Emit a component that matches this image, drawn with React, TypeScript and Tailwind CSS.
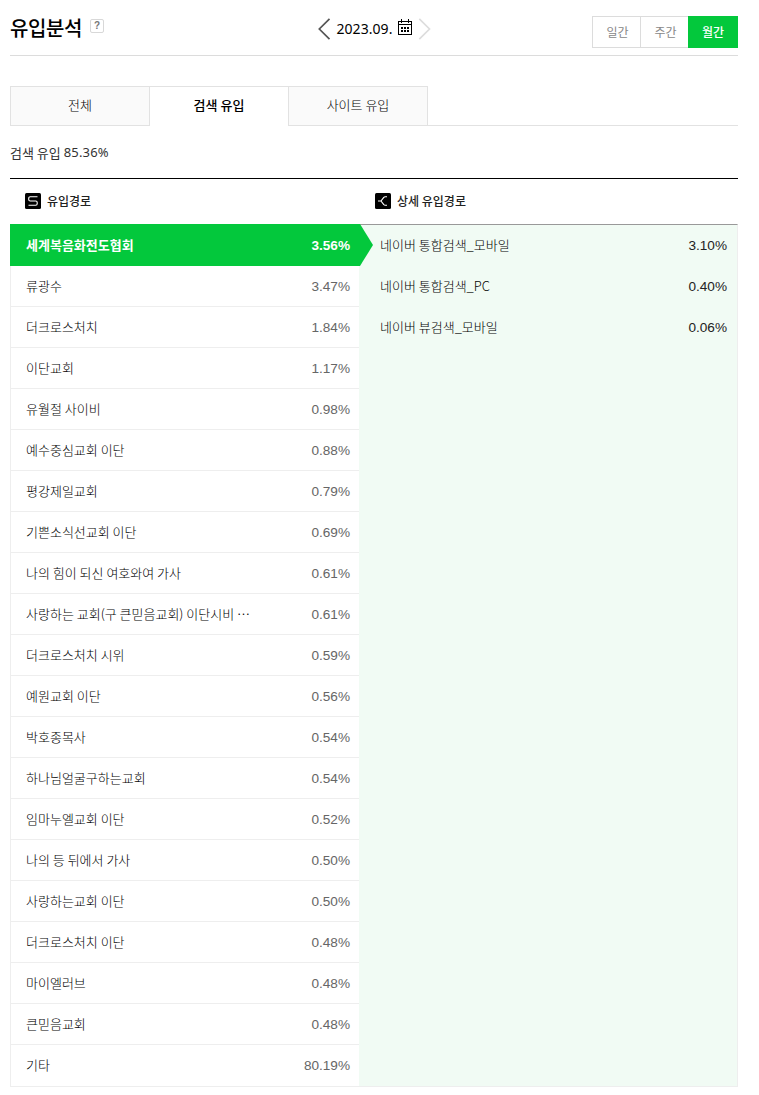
import { useState } from 'react';
import clsx from 'clsx';

const periods = ['일간', '주간', '월간'];
const tabs = ['전체', '검색 유입', '사이트 유입'];

const keywords = [
  { label: '세계복음화전도협회', value: '3.56%' },
  { label: '류광수', value: '3.47%' },
  { label: '더크로스처치', value: '1.84%' },
  { label: '이단교회', value: '1.17%' },
  { label: '유월절 사이비', value: '0.98%' },
  { label: '예수중심교회 이단', value: '0.88%' },
  { label: '평강제일교회', value: '0.79%' },
  { label: '기쁜소식선교회 이단', value: '0.69%' },
  { label: '나의 힘이 되신 여호와여 가사', value: '0.61%' },
  { label: '사랑하는 교회(구 큰믿음교회) 이단시비 ⋯', value: '0.61%' },
  { label: '더크로스처치 시위', value: '0.59%' },
  { label: '예원교회 이단', value: '0.56%' },
  { label: '박호종목사', value: '0.54%' },
  { label: '하나님얼굴구하는교회', value: '0.54%' },
  { label: '임마누엘교회 이단', value: '0.52%' },
  { label: '나의 등 뒤에서 가사', value: '0.50%' },
  { label: '사랑하는교회 이단', value: '0.50%' },
  { label: '더크로스처치 이단', value: '0.48%' },
  { label: '마이엘러브', value: '0.48%' },
  { label: '큰믿음교회', value: '0.48%' },
  { label: '기타', value: '80.19%' },
];

const details = [
  { label: '네이버 통합검색_모바일', value: '3.10%' },
  { label: '네이버 통합검색_PC', value: '0.40%' },
  { label: '네이버 뷰검색_모바일', value: '0.06%' },
];

function CalendarIcon() {
  return (
    <svg width="14" height="16" viewBox="0 0 14 16" shapeRendering="crispEdges" fill="#000">
      <path d="M0 2h14v14H0zM1 3v2h12V3zM1 6v9h12V6z" fillRule="evenodd" />
      <path d="M3 0h1v4H3zM10 0h1v4h-1z" />
      <path d="M3 8h2v2H3zM6 8h2v2H6zM9 8h2v2H9zM3 11h2v2H3zM6 11h2v2H6zM9 11h2v2H9z" />
    </svg>
  );
}

function SourceIcon() {
  return (
    <svg width="16" height="16" viewBox="0 0 16 16" fill="none">
      <rect width="16" height="16" rx="1.5" fill="#000" />
      <path d="M12.5 3.8H5.3Q3.7 3.8 3.7 5.4V6.4Q3.7 8 5.3 8H10.7Q12.2 8 12.2 9.5V10.7Q12.2 12.2 10.7 12.2H3.5" stroke="#fff" strokeWidth="1.1" />
    </svg>
  );
}

function BranchIcon() {
  return (
    <svg width="16" height="16" viewBox="0 0 16 16" fill="none">
      <rect width="16" height="16" rx="1.5" fill="#000" />
      <path d="M3 8h3M12 3.8H10.2Q9.4 3.8 8.8 4.4L6 8L8.8 11.6Q9.4 12.2 10.2 12.2H12" stroke="#fff" strokeWidth="1.1" />
    </svg>
  );
}

export default function App() {
  const [period, setPeriod] = useState('월간');
  const [tab, setTab] = useState('검색 유입');
  const [selected, setSelected] = useState(0);

  return (
    <div className="min-h-[1095px] bg-white pl-[10px] pr-[21px] font-['Noto_Sans_CJK_KR',sans-serif] text-[13px] text-black">
      <header className="grid h-14 grid-cols-[1fr_auto_1fr] items-start border-b border-[#dcdcdc]">
        <div className="flex items-start">
          <h1 className="mt-3 text-[20px] leading-8 font-medium tracking-[-0.4px]">유입분석</h1>
          <span className="mt-[19px] ml-[8px] flex h-[14px] w-[14px] items-center justify-center rounded-[2px] border border-[#d8d8d8] font-['Liberation_Sans',sans-serif] text-[10px] leading-none font-bold text-[#777]">
            ?
          </span>
        </div>
        <div className="flex items-center pt-[17px]">
          <button aria-label="이전">
            <svg width="13" height="22" viewBox="0 0 13 22" fill="none">
              <path d="M11.5 .8L1.3 11L11.5 21.2" stroke="#555" strokeWidth="1.7" />
            </svg>
          </button>
          <span className="ml-[6px] w-[56px] font-['Noto_Sans',sans-serif] text-[14px] leading-6 tracking-[0.05px] whitespace-nowrap">
            2023.09.
          </span>
          <span className="mb-[5px] ml-[5px]">
            <CalendarIcon />
          </span>
          <button aria-label="다음" className="ml-[6px]">
            <svg width="13" height="22" viewBox="0 0 13 22" fill="none">
              <path d="M1.3 .8L11.5 11L1.3 21.2" stroke="#ddd" strokeWidth="1.7" />
            </svg>
          </button>
        </div>
        <div className="flex justify-end pt-4">
          {periods.map((p) => (
            <button
              key={p}
              onClick={() => setPeriod(p)}
              className={clsx(
                'h-8 pb-px text-[12px]',
                p === period
                  ? 'w-[50px] bg-[#03c83c] font-medium text-white'
                  : 'w-12 border-y border-l border-[#dcdcdc] pl-[2px] text-[#888]'
              )}
            >
              {p}
            </button>
          ))}
        </div>
      </header>

      <nav className="mt-[30px] flex h-10">
        {tabs.map((t) => (
          <button
            key={t}
            onClick={() => setTab(t)}
            className={clsx(
              'border-t border-[#e2e2e2] pb-[3px]',
              t === tab ? 'w-[138px] font-medium' : 'w-[140px] border-x border-b bg-[#fafafa] font-light'
            )}
          >
            {t}
          </button>
        ))}
        <div className="flex-1 border-b border-[#e2e2e2]" />
      </nav>

      <p className="flex h-[52px] items-center pt-[2px] text-[13px] text-[#333]">
        <span>검색 유입</span>
        <span className="ml-[3px] font-['Noto_Sans',sans-serif] text-[13px] tracking-[0.15px]">85.36%</span>
      </p>

      <div className="flex h-[46px] border-t border-black text-[12px] font-medium text-[#222]">
        <div className="flex w-[350px] items-center gap-[6px] pb-px pl-[15px]">
          <SourceIcon />
          <span>유입경로</span>
        </div>
        <div className="flex items-center gap-[6px] pb-px pl-[15px]">
          <BranchIcon />
          <span>상세 유입경로</span>
        </div>
      </div>

      <div className="flex h-[863px]">
        <ul className="w-[349px] border-b border-l border-[#eee]">
          {keywords.map((k, i) => (
            <li
              key={k.label}
              onClick={() => setSelected(i)}
              className={clsx(
                'relative flex cursor-pointer items-center justify-between pl-[15px] last:pb-px',
                i === 0 ? 'h-[42px]' : 'h-[41px]',
                i === selected
                  ? '-mr-px -ml-px bg-[#03c83c] pr-[10px] pl-[16px] font-bold text-white'
                  : 'border-b border-[#eee] pr-[9px] font-light last:border-b-0'
              )}
            >
              <span className="whitespace-nowrap">{k.label}</span>
              <span
                className={clsx(
                  "pt-[2px] font-['Liberation_Sans',sans-serif] text-[13.6px]",
                  i !== selected && 'text-[#666]'
                )}
              >
                {k.value}
              </span>
              {i === selected && (
                <svg
                  className="absolute top-0 left-full h-full w-[13px]"
                  viewBox="0 0 13 42"
                  preserveAspectRatio="none"
                >
                  <path d="M0 0L13 21L0 42z" fill="#03c83c" />
                </svg>
              )}
            </li>
          ))}
        </ul>
        <ul className="flex-1 border-t border-r border-b border-t-[#999] border-r-[#eee] border-b-[#eee] bg-[#f1fbf4]">
          {details.map((d) => (
            <li key={d.label} className="flex h-[41px] items-center justify-between pr-[10px] pb-px pl-[21px] font-light">
              <span>{d.label}</span>
              <span className="pt-[2px] font-['Liberation_Sans',sans-serif] text-[13.6px] text-[#222]">{d.value}</span>
            </li>
          ))}
        </ul>
      </div>
    </div>
  );
}
